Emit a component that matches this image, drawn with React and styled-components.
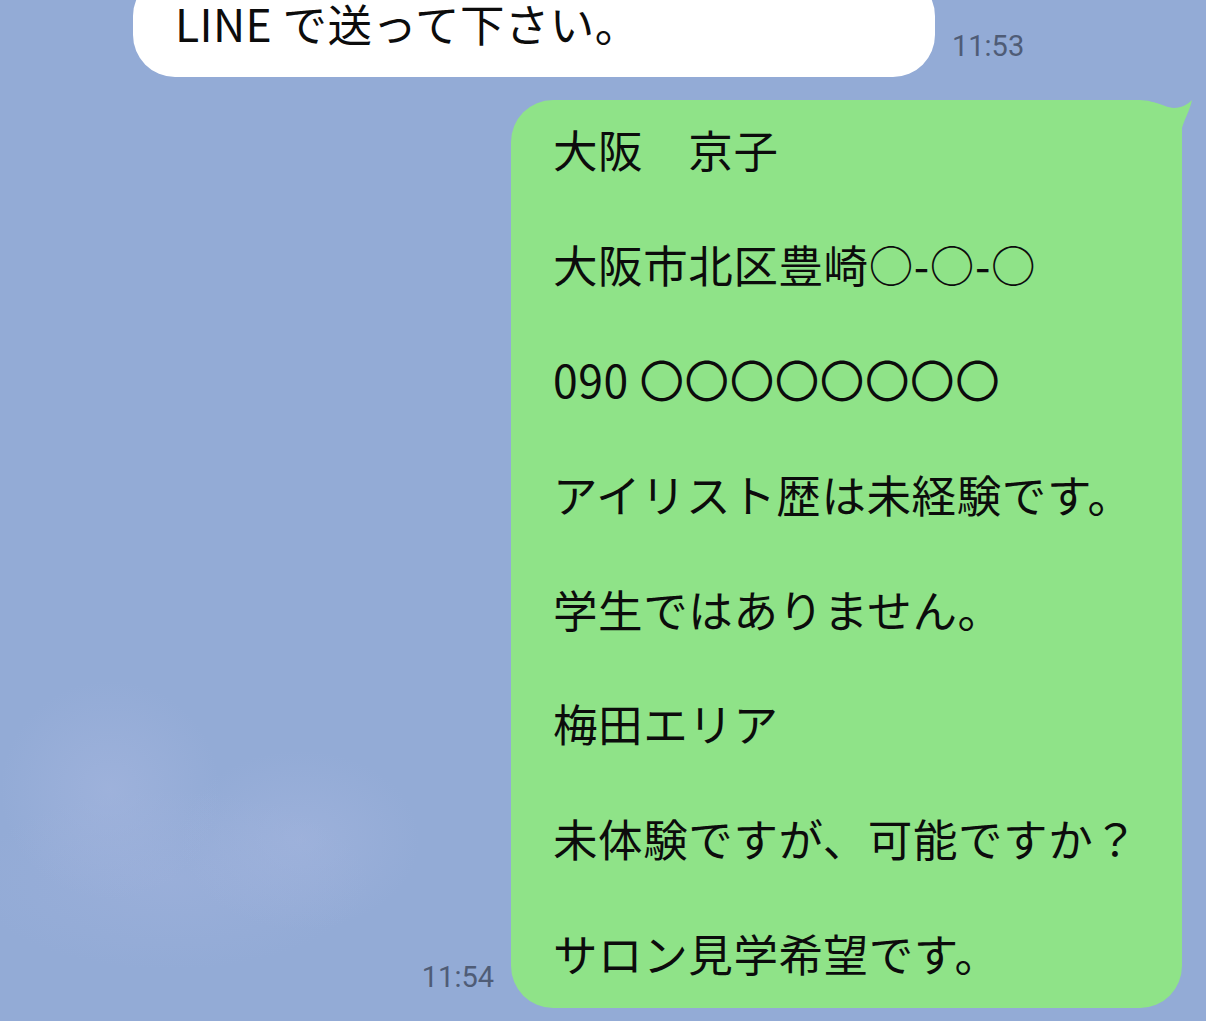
import React from 'react'
import styled, { createGlobalStyle } from 'styled-components'

const GlobalStyle = createGlobalStyle`
  html, body {
    margin: 0;
    padding: 0;
    background: #93abd6;
  }
  body {
    font-family: "Noto Sans CJK JP", "Noto Sans", sans-serif;
  }
`

const Screen = styled.div`
  position: relative;
  width: 1206px;
  height: 1021px;
  overflow: hidden;
  display: flex;
  flex-direction: column;
  background:
    radial-gradient(ellipse 110px 110px at 110px 790px, rgba(168, 184, 224, 0.5), transparent),
    radial-gradient(ellipse 120px 90px at 300px 840px, rgba(168, 184, 224, 0.45), transparent),
    radial-gradient(ellipse 200px 90px at 170px 880px, rgba(163, 180, 222, 0.4), transparent),
    #93abd6;
`

const Row = styled.div`
  display: flex;
  align-items: flex-end;
  gap: 17px;
  justify-content: ${p => (p.$mine ? 'flex-end' : 'flex-start')};
  padding: ${p => (p.$mine ? '0 24px 0 0' : '0 0 0 133px')};
  margin-top: ${p => p.$offset || 0}px;
`

const Bubble = styled.div`
  position: relative;
  box-sizing: border-box;
  width: ${p => p.$width}px;
  padding: 20px 42px 26px;
  border-radius: 42px;
  background: ${p => (p.$mine ? '#8fe388' : '#ffffff')};
  color: #0c0c0c;
  font-size: 44.5px;
  line-height: 57.4px;
  letter-spacing: ${p => (p.$mine ? '0.6px' : '0.4px')};
  white-space: pre-wrap;
`

const Tail = styled.svg`
  position: absolute;
  top: -2px;
  right: -10px;
  width: 40px;
  height: 44px;
`

const Time = styled.span`
  font-family: Roboto, "Liberation Sans", sans-serif;
  font-size: 29px;
  color: #4f5c76;
  margin-bottom: ${p => p.$lift}px;
`

const lines = [
  '大阪　京子',
  '',
  '大阪市北区豊崎○-○-○',
  '',
  '090 〇〇〇〇〇〇〇〇',
  '',
  'アイリスト歴は未経験です。',
  '',
  '学生ではありません。',
  '',
  '梅田エリア',
  '',
  '未体験ですが、可能ですか？',
  '',
  'サロン見学希望です。',
]

const App = () => (
  <Screen>
    <GlobalStyle />
    <Row $offset={-26}>
      <Bubble $width={802}>LINE で送って下さい。</Bubble>
      <Time $lift={14}>11:53</Time>
    </Row>
    <Row $mine $offset={23}>
      <Time $lift={14}>11:54</Time>
      <Bubble $mine $width={671}>
        <Tail viewBox="0 0 40 44">
          <path d="M0 4 C 10 6, 16 10, 22 10 C 30 10, 36 6, 40 2 C 38 12, 32 22, 30 30 L 30 44 L 0 44 Z" fill="#8fe388" />
        </Tail>
        {lines.join('\n')}
      </Bubble>
    </Row>
  </Screen>
)

export default App
